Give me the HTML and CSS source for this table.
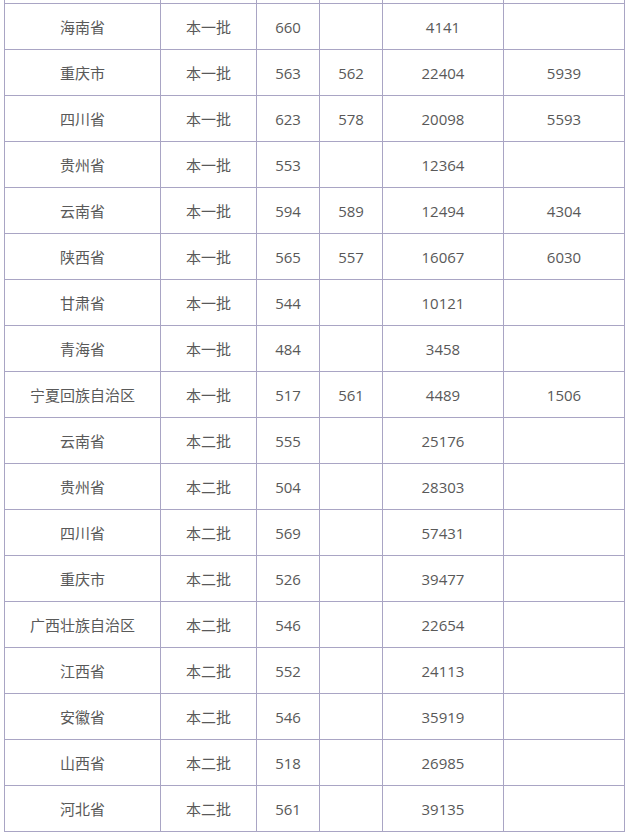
FILE: index.html
```html
<!DOCTYPE html>
<html lang="zh-CN">
<head>
<meta charset="utf-8">
<title>分数线</title>
<link rel="stylesheet" href="styles.css">
</head>
<body>
<table class="score-table">
  <colgroup>
    <col class="c-prov"><col class="c-batch"><col class="c-num"><col class="c-num2"><col class="c-wide"><col class="c-wide">
  </colgroup>
  <tbody>
    <tr class="spacer"><td></td><td></td><td></td><td></td><td></td><td></td></tr>
    <tr><td>海南省</td><td>本一批</td><td>660</td><td></td><td>4141</td><td></td></tr>
    <tr><td>重庆市</td><td>本一批</td><td>563</td><td>562</td><td>22404</td><td>5939</td></tr>
    <tr><td>四川省</td><td>本一批</td><td>623</td><td>578</td><td>20098</td><td>5593</td></tr>
    <tr><td>贵州省</td><td>本一批</td><td>553</td><td></td><td>12364</td><td></td></tr>
    <tr><td>云南省</td><td>本一批</td><td>594</td><td>589</td><td>12494</td><td>4304</td></tr>
    <tr><td>陕西省</td><td>本一批</td><td>565</td><td>557</td><td>16067</td><td>6030</td></tr>
    <tr><td>甘肃省</td><td>本一批</td><td>544</td><td></td><td>10121</td><td></td></tr>
    <tr><td>青海省</td><td>本一批</td><td>484</td><td></td><td>3458</td><td></td></tr>
    <tr><td>宁夏回族自治区</td><td>本一批</td><td>517</td><td>561</td><td>4489</td><td>1506</td></tr>
    <tr><td>云南省</td><td>本二批</td><td>555</td><td></td><td>25176</td><td></td></tr>
    <tr><td>贵州省</td><td>本二批</td><td>504</td><td></td><td>28303</td><td></td></tr>
    <tr><td>四川省</td><td>本二批</td><td>569</td><td></td><td>57431</td><td></td></tr>
    <tr><td>重庆市</td><td>本二批</td><td>526</td><td></td><td>39477</td><td></td></tr>
    <tr><td>广西壮族自治区</td><td>本二批</td><td>546</td><td></td><td>22654</td><td></td></tr>
    <tr><td>江西省</td><td>本二批</td><td>552</td><td></td><td>24113</td><td></td></tr>
    <tr><td>安徽省</td><td>本二批</td><td>546</td><td></td><td>35919</td><td></td></tr>
    <tr><td>山西省</td><td>本二批</td><td>518</td><td></td><td>26985</td><td></td></tr>
    <tr><td>河北省</td><td>本二批</td><td>561</td><td></td><td>39135</td><td></td></tr>
  </tbody>
</table>
</body>
</html>
```
FILE: styles.css
```css
html, body {
  margin: 0;
  padding: 0;
  background: #ffffff;
}
body {
  padding-left: 4px;
  font-family: "Open Sans", "Noto Sans CJK SC", sans-serif;
  color: #595959;
}
.score-table {
  border-collapse: collapse;
  table-layout: fixed;
  width: 620px;
  font-size: 15px;
}
.c-prov { width: 156px; }
.c-batch { width: 96px; }
.c-num { width: 63px; }
.c-num2 { width: 63px; }
.c-wide { width: 121px; }
.score-table td {
  border: 1px solid #a9a5c4;
  height: 45px;
  padding: 0;
  text-align: center;
  vertical-align: middle;
  line-height: 20px;
}
.score-table tr.spacer td {
  height: 3px;
  line-height: 0;
  font-size: 0;
  border-top: none;
}
```
